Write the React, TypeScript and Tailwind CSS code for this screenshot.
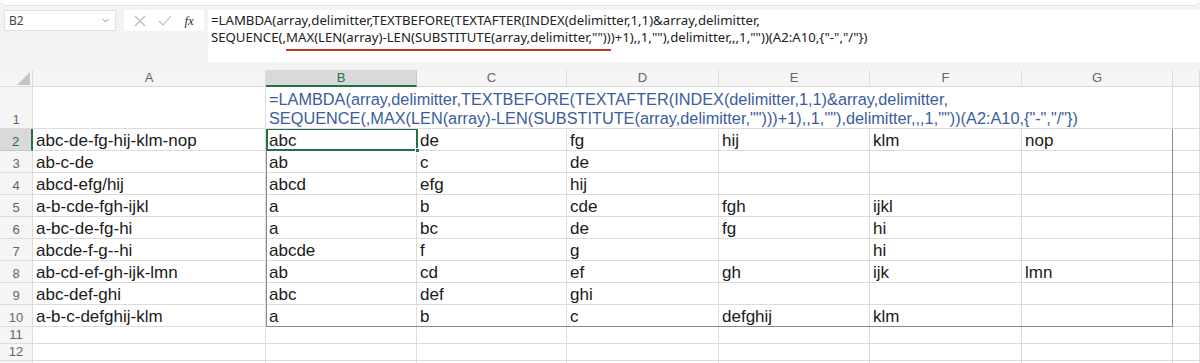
import { ChevronDown } from 'lucide-react';

const cols = ['A', 'B', 'C', 'D', 'E', 'F', 'G', ''];

const data: [string, string[]][] = [
  ['abc-de-fg-hij-klm-nop', ['abc', 'de', 'fg', 'hij', 'klm', 'nop']],
  ['ab-c-de', ['ab', 'c', 'de', '', '', '']],
  ['abcd-efg/hij', ['abcd', 'efg', 'hij', '', '', '']],
  ['a-b-cde-fgh-ijkl', ['a', 'b', 'cde', 'fgh', 'ijkl', '']],
  ['a-bc-de-fg-hi', ['a', 'bc', 'de', 'fg', 'hi', '']],
  ['abcde-f-g--hi', ['abcde', 'f', 'g', '', 'hi', '']],
  ['ab-cd-ef-gh-ijk-lmn', ['ab', 'cd', 'ef', 'gh', 'ijk', 'lmn']],
  ['abc-def-ghi', ['abc', 'def', 'ghi', '', '', '']],
  ['a-b-c-defghij-klm', ['a', 'b', 'c', 'defghij', 'klm', '']],
];

const line1 = '=LAMBDA(array,delimitter,TEXTBEFORE(TEXTAFTER(INDEX(delimitter,1,1)&array,delimitter,';
const line2a = 'SEQUENCE(,';
const line2b = 'MAX(LEN(array)-LEN(SUBSTITUTE(array,delimitter,""))';
const line2c = ')+1),,1,""),delimitter,,,1,""))(A2:A10,{"-","/"})';

const cell = 'border-r border-b border-[#dcdcdc] px-[3px] flex items-end text-[17px] leading-[19px] text-[#1a1a1a] whitespace-nowrap overflow-hidden';

function RowHead({ n, active }: { n?: number; active?: boolean }) {
  return (
    <div
      className={
        active
          ? 'bg-[#d9d9d9] border-b border-[#c8c8c8] border-r-2 border-r-[#217346] flex items-end justify-center text-[13px] leading-[16px] text-[#217346]'
          : 'bg-[#f5f5f5] border-b border-r border-[#dcdcdc] flex items-end justify-center text-[13px] leading-[16px] text-[#666]'
      }
    >
      {n}
    </div>
  );
}

export default function App() {
  return (
    <div className="w-[1200px] h-[363px] overflow-hidden bg-[#f3f3f3] font-['Liberation_Sans',Arial,sans-serif]">
      <div className="h-[6px] bg-white rounded-b-[6px] border-b border-[#e3e3e3]" />
      <div className="flex h-[56px] pt-[4px] pl-[4px]">
        <div className="w-[112px] h-[21px] bg-white border border-[#e1e1e1] flex items-center justify-between px-[4px] text-[12px] text-[#444] font-['Noto_Sans',sans-serif]">
          <span>B2</span>
          <ChevronDown size={11} strokeWidth={1.5} className="text-[#666]" />
        </div>
        <div className="ml-[8px] w-[80px] h-[21px] bg-white flex items-center justify-around px-[4px]">
          <svg width="12" height="12" viewBox="0 0 12 12">
            <path d="M1 1 L11 11 M11 1 L1 11" stroke="#b8b8b8" strokeWidth="1.1" fill="none" />
          </svg>
          <svg width="14" height="12" viewBox="0 0 14 12">
            <path d="M1 6 L5 10 L13 1" stroke="#b8b8b8" strokeWidth="1.1" fill="none" />
          </svg>
          <span className="text-[13px] italic text-[#333] font-['Liberation_Serif',serif]">fx</span>
        </div>
        <div className="ml-[4px] flex-1 h-[52px] bg-white pl-[3px] pt-[2px] text-[13.2px] leading-[17px] text-[#222] font-['Noto_Sans',sans-serif] whitespace-nowrap">
          <div>{line1}</div>
          <div>
            {line2a}
            <span className="relative">
              {line2b}
              <span className="absolute left-0 right-0 bottom-[-5px] h-[2px] bg-[#c0392b]" />
            </span>
            {line2c}
          </div>
        </div>
      </div>
      <div className="h-[8px]" />
      <div className="relative bg-white grid grid-cols-[33px_233px_151px_150px_152px_151px_152px_151px_1fr] grid-rows-[17px_42px_repeat(9,22px)_17px_17px_17px]">
        {/* header row */}
        <div className="bg-[#f5f5f5] border-b border-r border-[#dcdcdc] flex items-end justify-end pr-[2px] pb-[1px]">
          <div className="w-0 h-0 border-l-[13px] border-l-transparent border-b-[13px] border-b-[#c4c4c4]" />
        </div>
        {cols.map((c, i) =>
          c === 'B' ? (
            <div key={i} className="bg-[#d9d9d9] border-b-2 border-b-[#217346] border-r border-[#c8c8c8] flex items-center justify-center text-[13px] text-[#217346]">
              {c}
            </div>
          ) : (
            <div key={i} className="bg-[#f5f5f5] border-b border-r border-[#dcdcdc] flex items-center justify-center text-[13px] text-[#666]">
              {c}
            </div>
          )
        )}

        {/* row 1 */}
        <RowHead n={1} />
        <div className={cell} />
        <div className="col-span-6 border-r border-b border-[#dcdcdc] px-[3px] flex flex-col justify-end text-[16.3px] leading-[19px] text-[#3b5c9e] whitespace-nowrap overflow-visible z-10">
          <div>{line1}</div>
          <div>{line2a + line2b + line2c}</div>
        </div>
        <div className={cell} />

        {data.map(([src, parts], r) => (
          <div key={r} className="contents">
            <RowHead n={r + 2} active={r === 0} />
            <div className={cell}>{src}</div>
            {parts.map((p, j) => (
              <div key={j} className={cell}>
                {p}
              </div>
            ))}
            <div className={cell} />
          </div>
        ))}

        {[11, 12, undefined].map((n, k) => (
          <div key={k} className="contents">
            <RowHead n={n} />
            {cols.map((_, j) => (
              <div key={j} className={cell} />
            ))}
          </div>
        ))}

        {/* spill range outline */}
        <div className="absolute left-[266px] top-[58px] w-[907px] h-[199px] border border-[#7d8f96] pointer-events-none" />
        {/* active cell */}
        <div className="absolute left-[266px] top-[58px] w-[152px] h-[23px] border-2 border-[#217346] pointer-events-none">
          <div className="absolute right-[-4px] bottom-[-4px] w-[5px] h-[5px] bg-[#217346] border border-white" />
        </div>
      </div>
    </div>
  );
}
